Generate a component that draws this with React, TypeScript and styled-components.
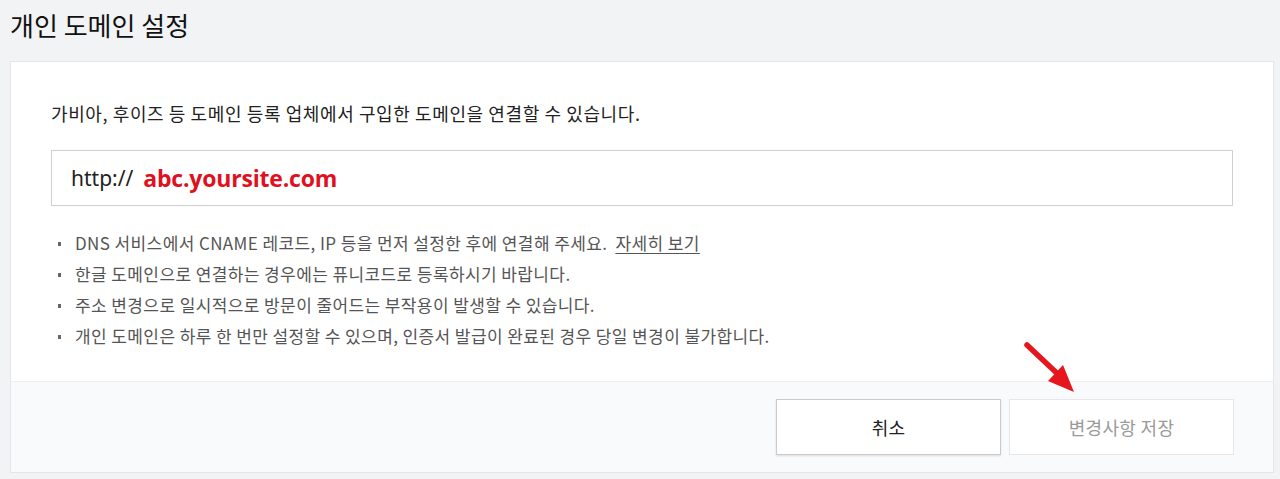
import React from "react";
import styled, { createGlobalStyle } from "styled-components";

const Global = createGlobalStyle`
  html, body { margin: 0; padding: 0; }
  body {
    background: #f2f3f5;
    font-family: "Noto Sans CJK KR", "Noto Sans", sans-serif;
    color: #222;
  }
`;

const Page = styled.div`
  width: 1280px;
  height: 479px;
  overflow: hidden;
  position: relative;
`;

const Title = styled.h1`
  margin: 0;
  padding: 7px 0 0 10px;
  height: 54px;
  box-sizing: border-box;
  font-size: 26px;
  font-weight: 400;
  letter-spacing: 0;
  color: #111;
  line-height: 36px;
`;

const Card = styled.section`
  margin: 7px 6px 0 10px;
  background: #fff;
  border: 1px solid #e4e6e9;
  box-sizing: border-box;
  height: 412px;
  display: flex;
  flex-direction: column;
`;

const Body = styled.div`
  padding: 38px 40px 0 40px;
  flex: 1;
`;

const Lead = styled.p`
  margin: 0;
  font-size: 18px;
  line-height: 26px;
  color: #222;
  letter-spacing: 0.6px;
`;

const InputBox = styled.div`
  margin-top: 24px;
  height: 56px;
  border: 1px solid #cfcfcf;
  box-sizing: border-box;
  display: flex;
  align-items: center;
  padding-left: 19px;
  gap: 10px;
`;

const Prefix = styled.span`
  font-family: "Noto Sans", "Open Sans", sans-serif;
  font-size: 21px;
  color: #222;
`;

const Domain = styled.span`
  font-family: "Open Sans", "Noto Sans", sans-serif;
  font-weight: 700;
  font-size: 23px;
  color: #e01020;
  letter-spacing: -0.2px;
`;

const Notes = styled.ul`
  margin: 25px 0 0 0;
  padding: 0;
  list-style: none;
  display: flex;
  flex-direction: column;
  gap: 7px;
`;

const Note = styled.li`
  position: relative;
  padding-left: 24px;
  font-size: 17px;
  line-height: 24px;
  color: #555;
  letter-spacing: 0.4px;
  &::before {
    content: "";
    position: absolute;
    left: 7px;
    top: 11px;
    width: 3px;
    height: 4px;
    background: #666;
  }
`;

const More = styled.a`
  margin-left: 8px;
  color: #555;
  text-decoration: underline;
  text-underline-offset: 3px;
`;

const Footer = styled.div`
  height: 91px;
  border-top: 1px solid #eef0f2;
  background: #f9fafb;
  display: flex;
  justify-content: flex-end;
  align-items: flex-start;
  padding: 17px 39px 0 0;
  gap: 8px;
  box-sizing: border-box;
`;

const Button = styled.button<{ $muted?: boolean }>`
  width: 225px;
  height: 56px;
  background: #fff;
  border: 1px solid ${(p) => (p.$muted ? "#e6e7e9" : "#c9cbce")};
  box-shadow: ${(p) => (p.$muted ? "none" : "0 1px 2px rgba(0,0,0,0.12)")};
  font-family: "Noto Sans CJK KR", "Noto Sans", sans-serif;
  font-size: 18px;
  color: ${(p) => (p.$muted ? "#9a9a9a" : "#222")};
  letter-spacing: 0.3px;
  cursor: pointer;
`;

const Arrow = styled.svg`
  position: absolute;
  left: 1018px;
  top: 336px;
  width: 64px;
  height: 64px;
  overflow: visible;
`;

export default function App() {
  return (
    <Page>
      <Global />
      <Title>개인 도메인 설정</Title>
      <Card>
        <Body>
          <Lead>가비아, 후이즈 등 도메인 등록 업체에서 구입한 도메인을 연결할 수 있습니다.</Lead>
          <InputBox>
            <Prefix>http://</Prefix>
            <Domain>abc.yoursite.com</Domain>
          </InputBox>
          <Notes>
            <Note>
              DNS 서비스에서 CNAME 레코드, IP 등을 먼저 설정한 후에 연결해 주세요.
              <More href="#">자세히 보기</More>
            </Note>
            <Note>한글 도메인으로 연결하는 경우에는 퓨니코드로 등록하시기 바랍니다.</Note>
            <Note>주소 변경으로 일시적으로 방문이 줄어드는 부작용이 발생할 수 있습니다.</Note>
            <Note>개인 도메인은 하루 한 번만 설정할 수 있으며, 인증서 발급이 완료된 경우 당일 변경이 불가합니다.</Note>
          </Notes>
        </Body>
        <Footer>
          <Button>취소</Button>
          <Button $muted>변경사항 저장</Button>
        </Footer>
      </Card>
      <Arrow viewBox="0 0 64 64">
        <line x1="9" y1="9" x2="44" y2="42" stroke="#e5161e" strokeWidth="5.5" strokeLinecap="round" />
        <polygon points="56,56 30,45 45,29" fill="#e5161e" />
      </Arrow>
    </Page>
  );
}
